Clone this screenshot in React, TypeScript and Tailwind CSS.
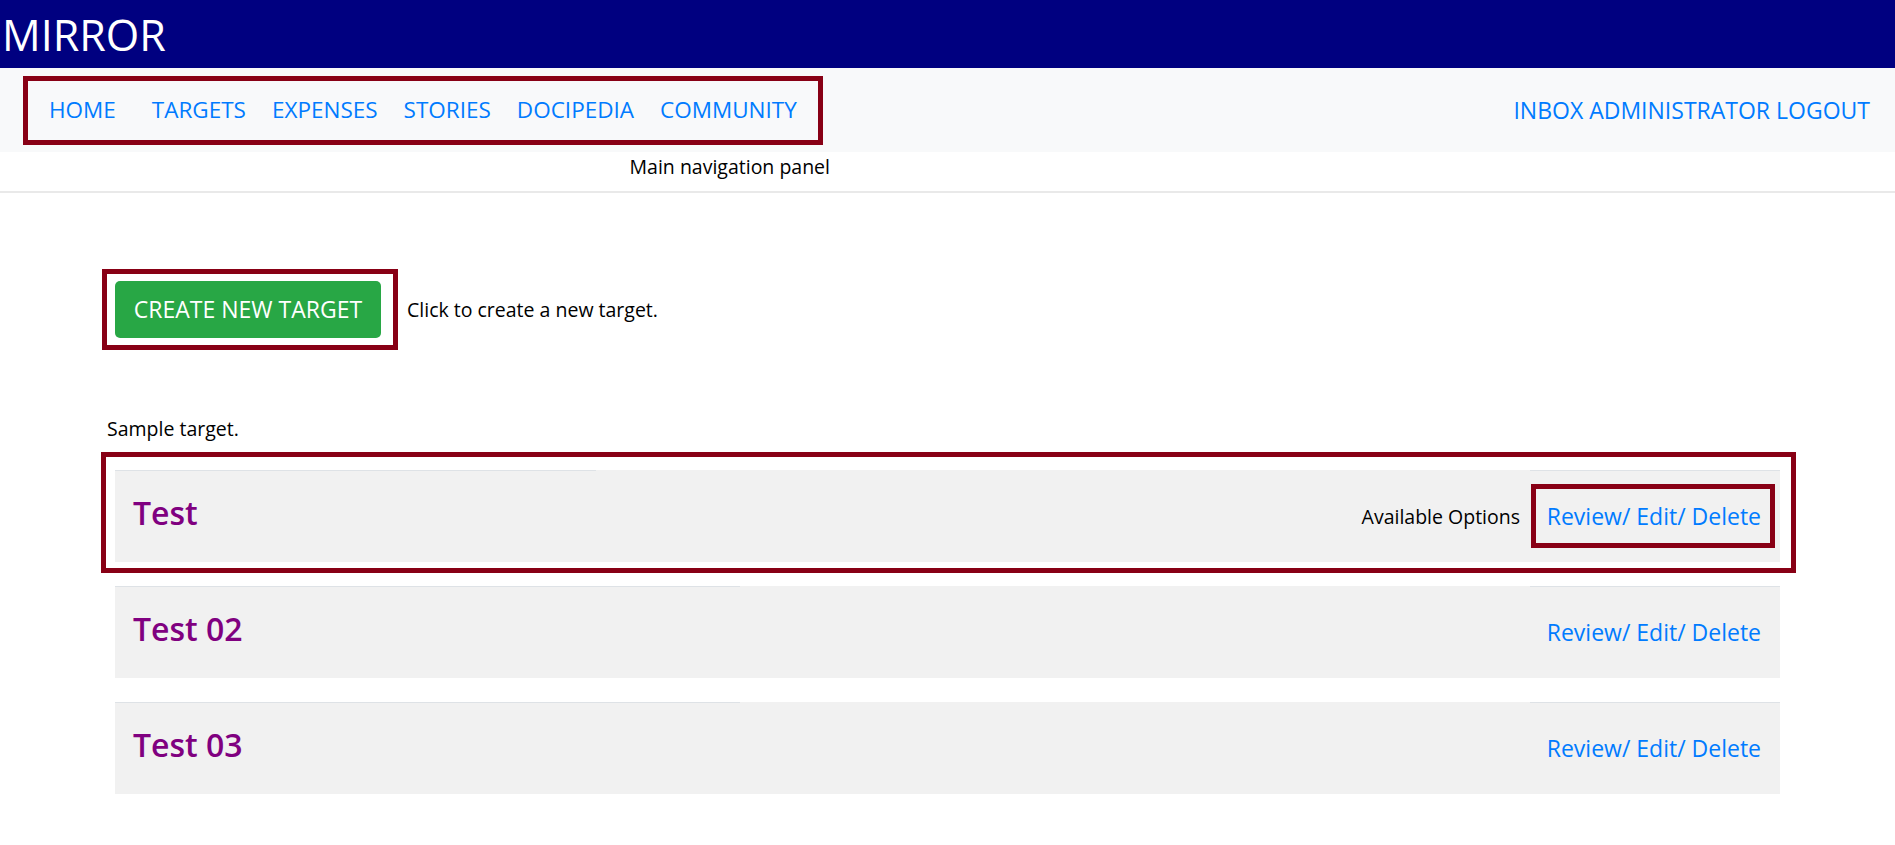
import React from "react";

const NAV_LINKS = ["HOME", "TARGETS", "EXPENSES", "STORIES", "DOCIPEDIA", "COMMUNITY"];

const TARGETS = [
  { id: "t1", title: "Test", leftWidth: "w-[481px]", annotated: true },
  { id: "t2", title: "Test 02", leftWidth: "w-[625px]", annotated: false },
  { id: "t3", title: "Test 03", leftWidth: "w-[625px]", annotated: false },
];

function TargetRow({ title, leftWidth, annotated }: { title: string; leftWidth: string; annotated: boolean }) {
  return (
    <div className="relative mb-[24px]">
      {/* annotation frame drawn over the first sample row */}
      {annotated && (
        <div className="absolute -left-[14px] -right-[16px] -top-[18px] -bottom-[11px] border-[5px] border-[#880015] pointer-events-none" />
      )}
      <div className="flex h-[92px] bg-[#f1f1f1]">
        <div className={`${leftWidth} shrink-0 border-t border-[#dee2e6] pl-[18px] flex items-center pb-[8px]`}>
          <h3 className="text-[32px] leading-[40px] font-semibold text-[#800080]">{title}</h3>
        </div>
        <div className="flex-1 flex items-center justify-end pr-[10px]">
          {annotated && <span className="text-[19.5px] leading-[27px] text-black">Available Options</span>}
        </div>
        <div className="w-[250px] shrink-0 border-t border-[#dee2e6] px-[19px] flex items-center justify-end">
          <span className="relative inline-block text-[23px] leading-[27px] text-[#007bff] whitespace-nowrap">
            {annotated && (
              <span className="absolute -left-[16px] -right-[14px] -top-[19px] -bottom-[18px] border-[5px] border-[#880015] pointer-events-none" />
            )}
            Review/ Edit/ Delete
          </span>
        </div>
      </div>
    </div>
  );
}

export default function App() {
  return (
    <div className="min-h-screen bg-white text-black" style={{ fontFamily: '"Open Sans", "Noto Sans", sans-serif' }}>
      {/* Brand bar */}
      <header className="h-[68px] bg-[#000080] flex items-center pl-[2px]">
        <span className="text-[43px] leading-none text-white">MIRROR</span>
      </header>

      {/* Main navigation */}
      <nav className="h-[84px] bg-[#f8f9fa] flex items-center justify-between pl-[23px] pr-[25px]">
        <ul className="h-[69px] flex items-center border-[5px] border-[#880015] px-[8px]">
          {NAV_LINKS.map((link, i) => (
            <li key={link}>
              <a className={`block px-[13px] text-[22.5px] leading-[30px] text-[#007bff] ${i === 0 ? "mr-[10px]" : ""}`}>
                {link}
              </a>
            </li>
          ))}
        </ul>
        <div className="flex items-center gap-[6px] text-[23px] leading-[30px] text-[#007bff]">
          <a>INBOX</a>
          <a>ADMINISTRATOR</a>
          <a>LOGOUT</a>
        </div>
      </nav>
      <div className="h-[41px] border-b-2 border-[#e9e9e9]">
        <p className="w-[830px] text-right text-[19.5px] leading-[29px]">Main navigation panel</p>
      </div>

      <main className="px-[115px] pt-[88px]">
        <div className="flex items-center">
          <span className="relative inline-block">
            <span className="absolute -left-[13px] -right-[17px] -top-[12px] -bottom-[12px] border-[5px] border-[#880015] pointer-events-none" />
            <button className="w-[266px] h-[57px] rounded-[5px] bg-[#28a745] text-white text-[23px] leading-none">
              CREATE NEW TARGET
            </button>
          </span>
          <span className="ml-[26px] text-[19.5px] leading-[27px]">Click to create a new target.</span>
        </div>

        <p className="mt-[77px] -ml-[8px] text-[19.5px] leading-[27px]">Sample target.</p>

        <div className="mt-[28px]">
          {TARGETS.map((t) => (
            <TargetRow key={t.id} title={t.title} leftWidth={t.leftWidth} annotated={t.annotated} />
          ))}
        </div>
      </main>
    </div>
  );
}
